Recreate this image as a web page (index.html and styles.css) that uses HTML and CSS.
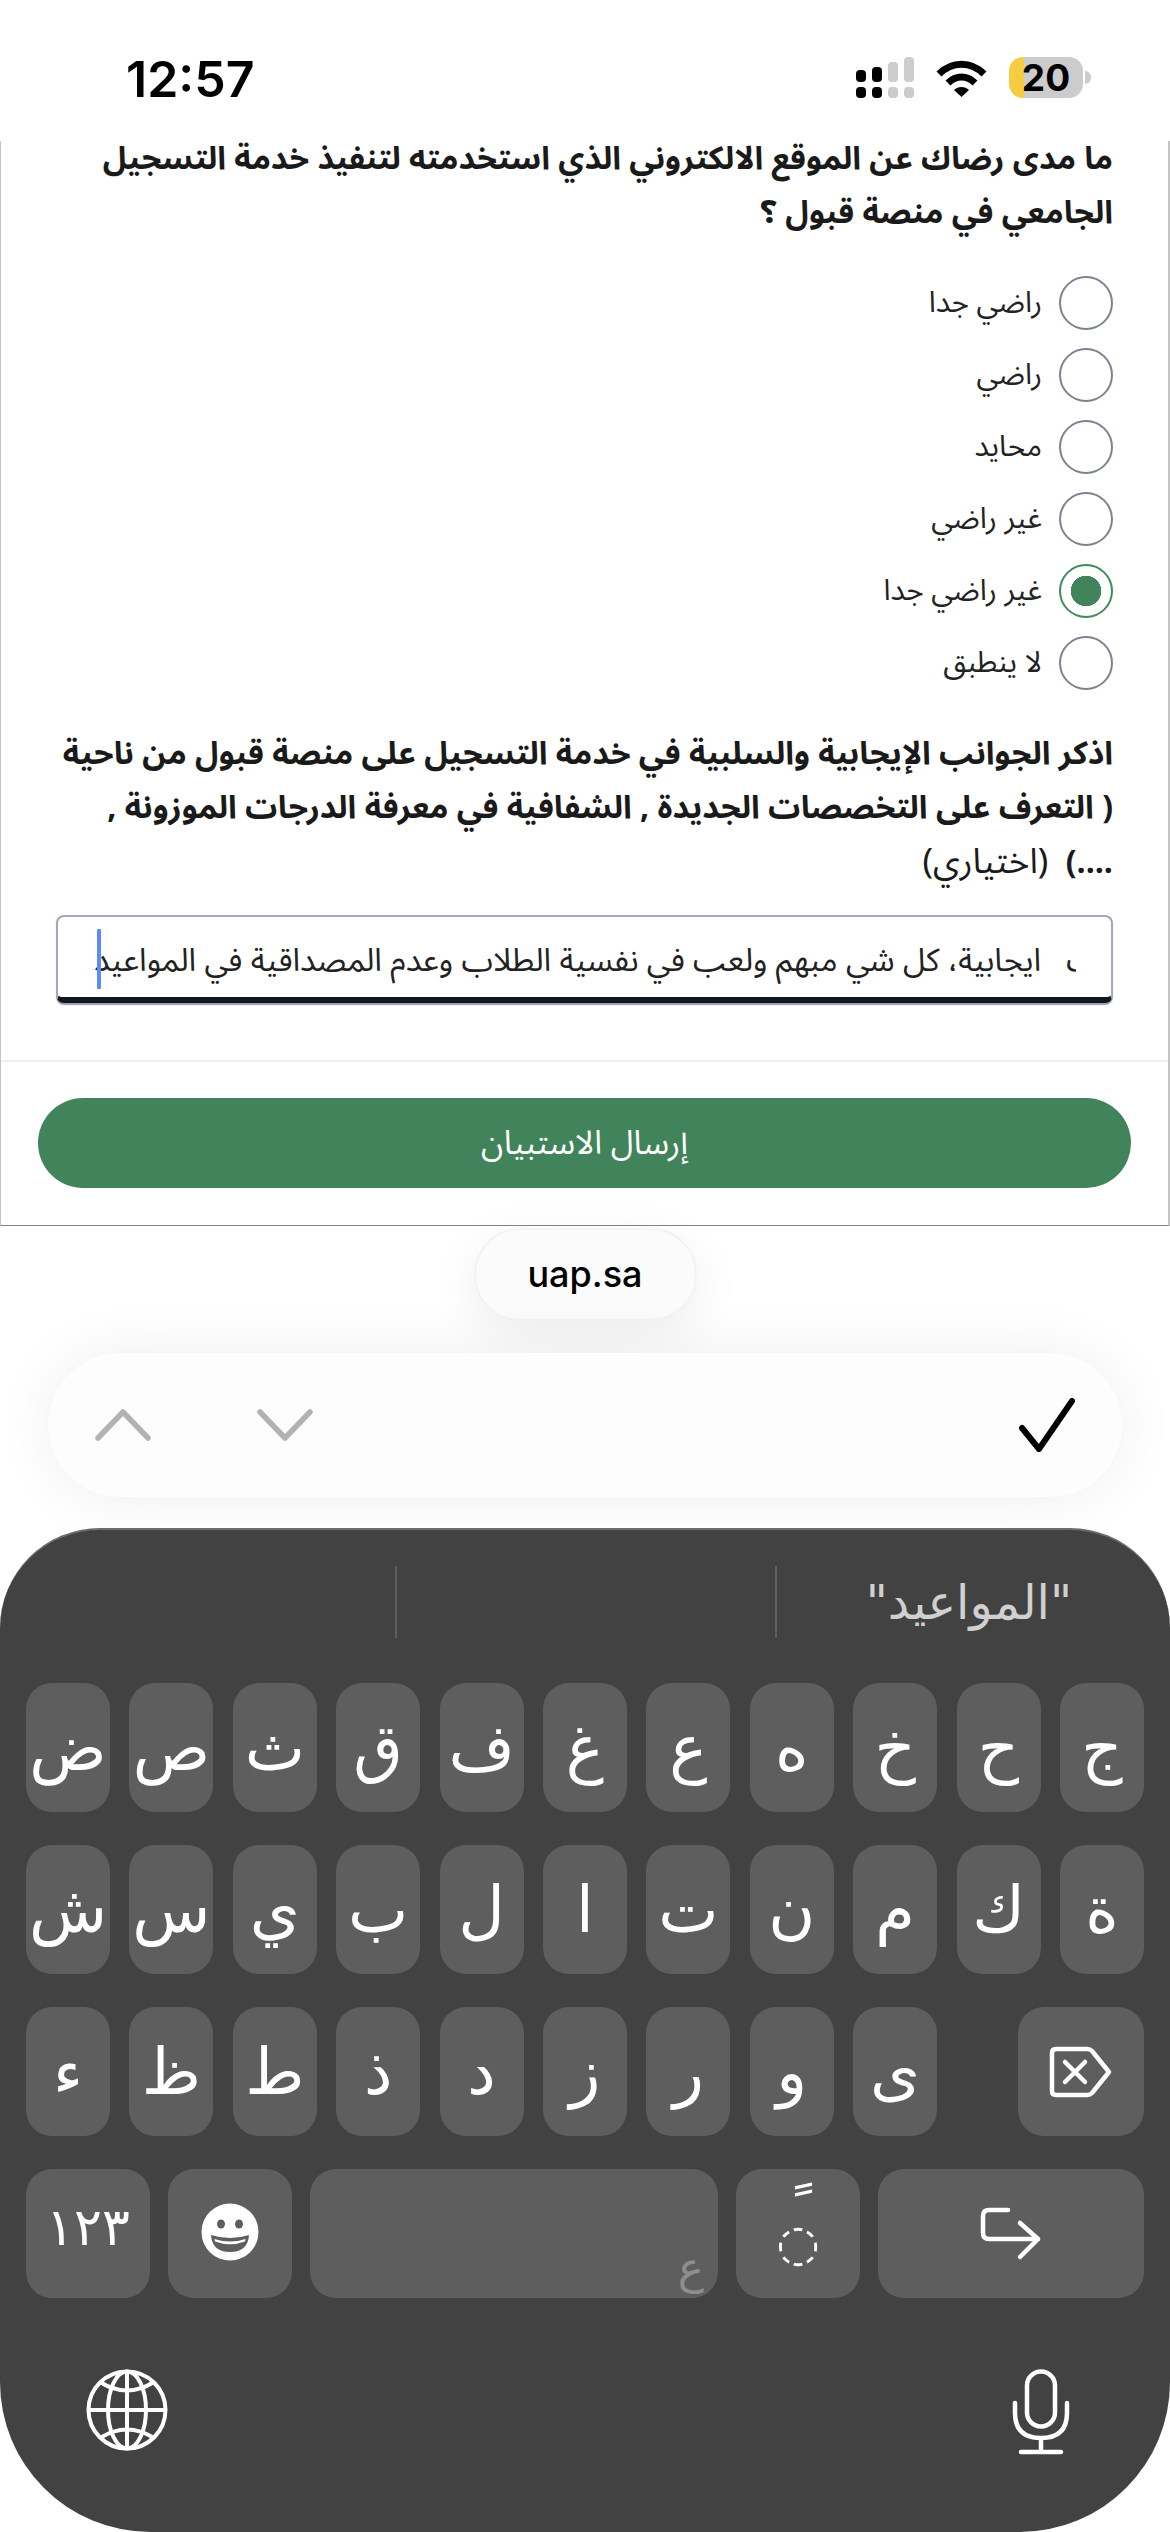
FILE: index.html
```html
<!DOCTYPE html>
<html lang="ar">
<head>
<meta charset="utf-8">
<title>uap.sa</title>
<link rel="stylesheet" href="styles.css">
</head>
<body>
<div class="phone">
  <header class="status" dir="ltr">
    <div class="time">12:57</div>
    <div class="status-icons">
      <svg class="signal" width="58" height="41" viewBox="0 0 58 41">
        <g fill="#000"><rect x="0" y="13" width="10" height="12" rx="4"/><rect x="16" y="10" width="10" height="15" rx="4"/><rect x="0" y="30" width="10" height="11" rx="4"/><rect x="16" y="30" width="10" height="11" rx="4"/></g>
        <g fill="#ccc"><rect x="32" y="5" width="10" height="20" rx="4"/><rect x="48" y="0" width="10" height="25" rx="4"/><rect x="32" y="30" width="10" height="11" rx="4"/><rect x="48" y="30" width="10" height="11" rx="4"/></g>
      </svg>
      <svg class="wifi" width="51" height="37" viewBox="0 0 51 37">
        <path d="M3 14C16 1 35 1 48 14" fill="none" stroke="#000" stroke-width="7"/>
        <path d="M12 23C20 15 31 15 39 23" fill="none" stroke="#000" stroke-width="7"/>
        <path d="M18 30C22 26 29 26 33 30L25.500 37Z" fill="#000"/>
      </svg>
      <div class="battery">20</div>
    </div>
  </header>

  <main class="form" dir="rtl">
    <div class="question q1">ما مدى رضاك عن الموقع الالكتروني الذي استخدمته لتنفيذ خدمة التسجيل<br>الجامعي في منصة قبول ؟</div>
    <div class="options">
      <div class="option"><span class="radio"></span><span>راضي جدا</span></div>
      <div class="option"><span class="radio"></span><span>راضي</span></div>
      <div class="option"><span class="radio"></span><span>محايد</span></div>
      <div class="option"><span class="radio"></span><span>غير راضي</span></div>
      <div class="option"><span class="radio checked"></span><span>غير راضي جدا</span></div>
      <div class="option"><span class="radio"></span><span>لا ينطبق</span></div>
    </div>
    <div class="question q2">اذكر الجوانب الإيجابية والسلبية في خدمة التسجيل على منصة قبول من ناحية<br>( التعرف على التخصصات الجديدة , الشفافية في معرفة الدرجات الموزونة ,<br>....) <span class="optional">&nbsp;(اختياري)</span></div>
    <div class="field" dir="ltr">
      <div class="field-clip"><span class="field-text" dir="rtl">ليست&nbsp;&nbsp;&nbsp;ايجابية، كل شي مبهم ولعب في نفسية الطلاب وعدم المصداقية في المواعيد</span></div>
      <span class="caret"></span>
    </div>
    <div class="divider"></div>
    <div class="submit">إرسال الاستبيان</div>
  </main>

  <section class="chrome">
    <div class="url">uap.sa</div>
    <div class="toolbar">
      <svg class="chev" width="56" height="32" viewBox="0 0 56 32"><path d="M3 29L28 3L53 29" fill="none" stroke="#b2b2b2" stroke-width="5.500" stroke-linecap="round" stroke-linejoin="round"/></svg>
      <svg class="chev down" width="56" height="32" viewBox="0 0 56 32"><path d="M3 3L28 29L53 3" fill="none" stroke="#b2b2b2" stroke-width="5.500" stroke-linecap="round" stroke-linejoin="round"/></svg>
      <svg class="check" width="56" height="54" viewBox="0 0 56 54"><path d="M3 30L20 51L53 3" fill="none" stroke="#000" stroke-width="6" stroke-linecap="round" stroke-linejoin="round"/></svg>
    </div>
  </section>

  <section class="keyboard" dir="ltr">
    <div class="suggestions">
      <div class="sug"></div>
      <div class="sug mid"></div>
      <div class="sug word" dir="rtl">"المواعيد"</div>
    </div>
    <div class="keys">
      <div class="key">ض</div><div class="key">ص</div><div class="key">ث</div><div class="key">ق</div><div class="key">ف</div><div class="key">غ</div><div class="key">ع</div><div class="key">ه</div><div class="key">خ</div><div class="key">ح</div><div class="key">ج</div>
      <div class="key">ش</div><div class="key">س</div><div class="key">ي</div><div class="key">ب</div><div class="key">ل</div><div class="key">ا</div><div class="key">ت</div><div class="key">ن</div><div class="key">م</div><div class="key">ك</div><div class="key">ة</div>
      <div class="key">ء</div><div class="key">ظ</div><div class="key">ط</div><div class="key">ذ</div><div class="key">د</div><div class="key">ز</div><div class="key">ر</div><div class="key">و</div><div class="key">ى</div>
      <div class="key back">
        <svg width="64" height="52" viewBox="0 0 64 52"><path d="M7 3H38Q41 3 43 5L60 26L43 47Q41 49 38 49H7Q3 49 3 45V7Q3 3 7 3Z" fill="none" stroke="#fff" stroke-width="4.500" stroke-linejoin="round"/><path d="M16 16L36 36M36 16L16 36" stroke="#fff" stroke-width="4.500" stroke-linecap="round"/></svg>
      </div>
    </div>
    <div class="row4">
      <div class="key k-num">١٢٣</div>
      <div class="key k-emoji">
        <svg width="58" height="58" viewBox="0 0 58 58"><circle cx="29" cy="29" r="28.500" fill="#fff"/><ellipse cx="20" cy="21" rx="4" ry="4.500" fill="#5e5e5e"/><ellipse cx="38" cy="21" rx="4" ry="4.500" fill="#5e5e5e"/><path d="M10 32Q29 38 48 32Q47 49 29 49Q11 49 10 32Z" fill="#5e5e5e"/><path d="M13.500 36Q29 41 44.500 36L44 38.500Q29 44 14 38.500Z" fill="#fff"/></svg>
      </div>
      <div class="key k-space"><span class="space-mark">ع</span></div>
      <div class="key k-mark"><span class="tanwin">&nbsp;ً</span><span class="dotted">◌</span></div>
      <div class="key k-return">
        <svg width="62" height="54" viewBox="0 0 62 54"><path d="M28 3H9Q3 3 3 9V26Q3 32 9 32H58" fill="none" stroke="#fff" stroke-width="4.500" stroke-linecap="round"/><path d="M40 16L58 32L40 50" fill="none" stroke="#fff" stroke-width="4.500" stroke-linecap="round" stroke-linejoin="round"/></svg>
      </div>
    </div>
    <div class="kb-bottom">
      <svg width="82" height="82" viewBox="0 0 82 82" fill="none" stroke="#fff" stroke-width="4"><circle cx="41" cy="41" r="38.500"/><ellipse cx="41" cy="41" rx="19" ry="38.500"/><path d="M41 2.500V79.500M2.500 41H79.500M14 13Q41 30 68 13M14 69Q41 52 68 69"/></svg>
      <svg width="58" height="86" viewBox="0 0 58 86" fill="none" stroke="#fff" stroke-width="4.500" stroke-linecap="round"><rect x="15" y="2.500" width="28" height="55" rx="14"/><path d="M3 34V44Q3 69 29 69Q55 69 55 44V34M29 69V83M9 83H49"/></svg>
    </div>
  </section>
</div>
</body>
</html>
```

FILE: styles.css
```css
* { box-sizing: border-box; }
html, body { margin: 0; padding: 0; background: #fff; }
.phone {
  width: 1170px;
  height: 2532px;
  overflow: hidden;
  display: flex;
  flex-direction: column;
  font-family: "Noto Sans Arabic", "Noto Sans", "DejaVu Sans", sans-serif;
  color: #1b1b1b;
}

/* status bar */
.status {
  height: 141px;
  flex: none;
  display: flex;
  justify-content: space-between;
  align-items: flex-start;
  padding: 49px 87px 0 126px;
  background: #fff;
}
.time { font-family: Inter, sans-serif; font-weight: 600; font-size: 50px; line-height: 60px; color: #000; }
.status-icons { display: flex; align-items: center; gap: 22px; margin-top: 8px; }
.wifi { margin-top: 2px; }
.battery {
  position: relative;
  width: 74px;
  height: 41px;
  border-radius: 14px;
  background: linear-gradient(90deg, #f5cd44 15px, #ccc 15px);
  font: 700 37px/41px Inter, sans-serif;
  color: #000;
  text-align: center;
}
.battery::after {
  content: "";
  position: absolute;
  left: 76px;
  top: 14px;
  width: 6px;
  height: 13px;
  border-radius: 0 7px 7px 0;
  background: #ccc;
}

/* form */
.form {
  height: 1085px;
  flex: none;
  overflow: hidden;
  border-left: 1px solid #c4c4c4;
  border-right: 2px solid #c4c4c4;
  border-bottom: 1px solid #858585;
  padding: 0 55px 0 0;
}
.question { font-weight: 700; font-size: 32px; line-height: 54px; white-space: nowrap; color: #1a1a1a; }
.q1 { margin-top: -9px; }
.options { display: flex; flex-direction: column; gap: 19px; margin-top: 36px; }
.option { display: flex; align-items: center; gap: 17px; height: 53px; font-size: 29.500px; color: #222; }
.radio { width: 54px; height: 54px; flex: none; border-radius: 50%; border: 2px solid #7c8290; background: #fff; }
.radio.checked {
  border-color: #3f8a5e;
  background: radial-gradient(circle, #41845b 15px, #fff 15.500px);
}
.q2 { margin-top: 38px; }
.optional { font-weight: 400; font-size: 35px; }
.field {
  position: relative;
  width: 1057px;
  height: 88px;
  margin: 25px 0 0 0;
  padding: 8px 35px 0 36px;
  border: 2px solid #a3a9b8;
  border-bottom: 6px solid #12161f;
  border-radius: 8px;
  box-shadow: 0 2px 1px #9a9fac;
  background: #fff;
  display: flex;
  align-items: center;
}
.field-clip { width: 100%; display: flex; justify-content: flex-start; overflow: hidden; }
.field-text { flex: none; white-space: nowrap; font-size: 32px; line-height: 60px; color: #222; }
.caret { position: absolute; left: 39px; top: 12px; width: 4px; height: 60px; background: #5a8df5; border-radius: 1px; }
.divider { height: 2px; margin: 57px -55px 0 0; background: #eeeef0; }
.submit {
  width: 1093px;
  height: 90px;
  margin: 36px -18px 0 0;
  border-radius: 45px;
  background: #41845b;
  color: #fff;
  font-size: 33px;
  display: flex;
  align-items: center;
  justify-content: center;
}

/* browser chrome */
.chrome { height: 302px; flex: none; display: flex; flex-direction: column; align-items: center; background: #fff; }
.url {
  width: 223px;
  height: 93px;
  margin-top: 2px;
  border-radius: 46px;
  border: 2px solid #f3f3f3;
  background: #fbfbfb;
  box-shadow: 0 14px 50px rgba(0, 0, 0, 0.07);
  font: 500 36px/89px Inter, sans-serif;
  color: #000;
  text-align: center;
}
.toolbar {
  width: 1074px;
  height: 144px;
  margin-top: 32px;
  padding: 0 47px;
  border-radius: 72px;
  background: #fdfdfd;
  box-shadow: 0 0 60px rgba(0, 0, 0, 0.07);
  display: flex;
  align-items: center;
}
.chev.down { margin-left: 106px; }
.check { margin-left: auto; }

/* keyboard */
.keyboard {
  flex: 1;
  position: relative;
  background: #424242;
  border-top: 2px solid #6c6c6c;
  border-radius: 100px 100px 150px 150px;
  padding: 0 26px;
  color: #fff;
  font-family: "DejaVu Sans", sans-serif;
}
.suggestions { display: flex; height: 72px; margin: 36px -26px 45px; }
.sug { display: flex; align-items: center; }
.sug:nth-child(1) { width: 395px; }
.sug.mid { width: 382px; border-left: 2px solid #5f5f5f; border-right: 2px solid #5f5f5f; }
.sug.word { flex: 1; padding-right: 98px; font-size: 48px; color: #d0d0d0; justify-content: flex-start; }
.keys {
  display: grid;
  grid-template-columns: repeat(11, 84px);
  grid-auto-rows: 129px;
  justify-content: space-between;
  row-gap: 33px;
}
.key {
  background: #5e5e5e;
  border-radius: 26px;
  display: flex;
  align-items: center;
  justify-content: center;
  font-size: 64px;
  line-height: 1;
}
.back { grid-column: 10 / 12; justify-self: end; width: 126px; }
.row4 { display: flex; gap: 18px; margin-top: 33px; height: 129px; }
.k-num { width: 124px; font-size: 52px; padding-bottom: 14px; }
.k-emoji { width: 124px; padding-bottom: 3px; }
.k-space { width: 408px; position: relative; }
.space-mark { position: absolute; right: 14px; bottom: 8px; font-size: 44px; color: #8e8e8e; }
.k-mark { width: 124px; flex-direction: column; padding-bottom: 2px; }
.tanwin { font-size: 60px; line-height: 20px; height: 20px; }
.dotted { font-size: 50px; line-height: 44px; }
.k-return { width: 266px; }
.kb-bottom { display: flex; justify-content: space-between; align-items: flex-start; margin-top: 71px; padding: 0 74px 0 60px; }
```
